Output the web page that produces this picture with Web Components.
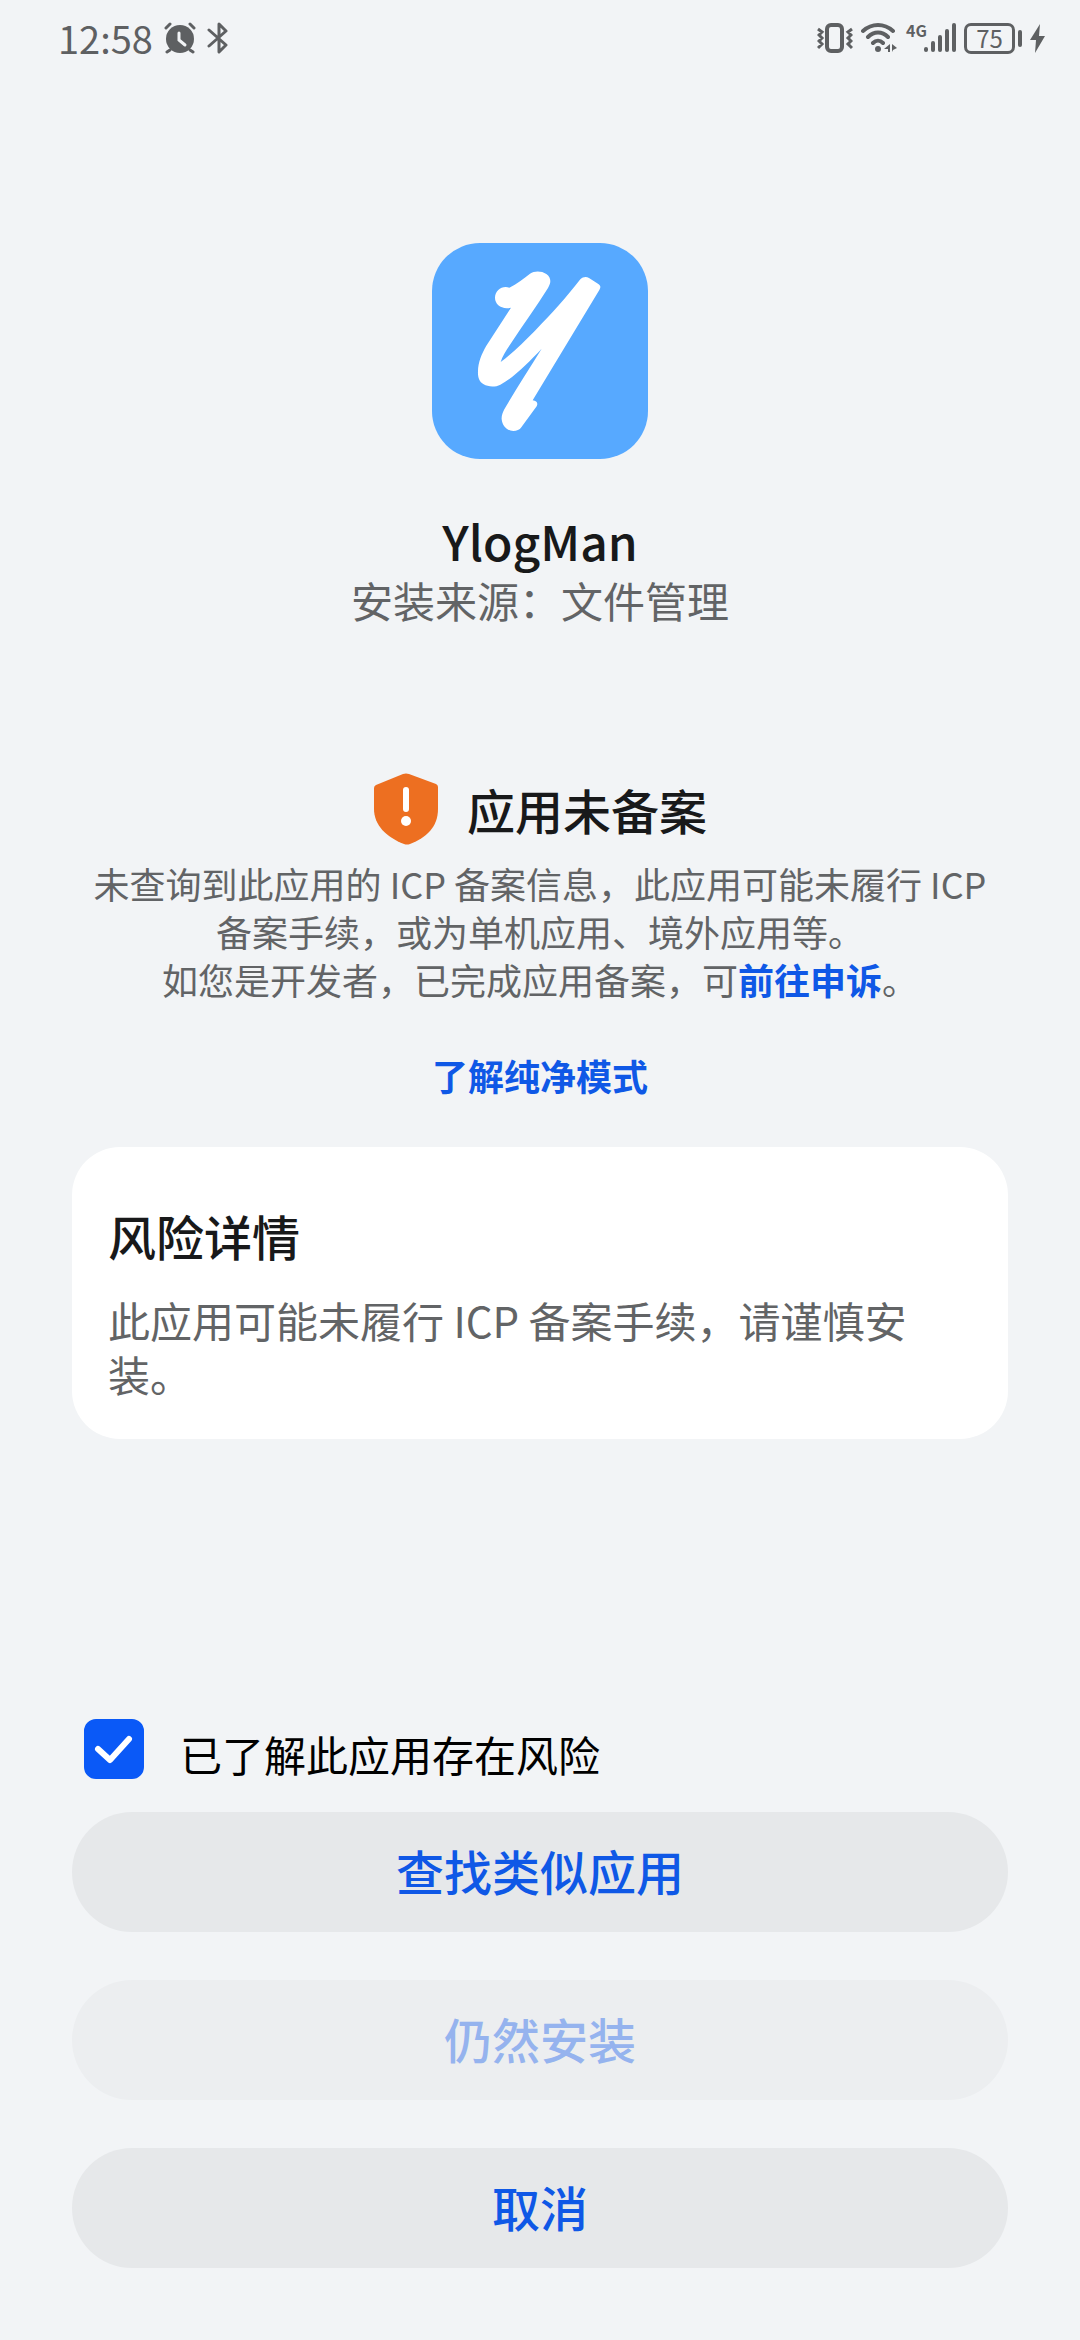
<!doctype html>
<html lang="zh-CN">
<head>
    <meta charset="UTF-8">
    <meta name="viewport" content="width=device-width, initial-scale=1">
    <title>YlogMan</title>
    <style>
        body {
            margin: 0;
            background: #f2f4f6;
            color: #18191a;
            font-family: "Noto Sans CJK SC", sans-serif;
            --accent: #0f58e6;
            --muted: #626466;
        }
    </style>
</head>
<body>
<install-page>
    <status-bar slot="status" time="12:58" battery="75"></status-bar>

    <app-header>
        <app-logo slot="icon"></app-logo>
        YlogMan
        <span slot="source">安装来源：文件管理</span>
    </app-header>

    <risk-notice>
        <span slot="title">应用未备案</span>
        未查询到此应用的 ICP 备案信息，此应用可能未履行 ICP 备案手续，或为单机应用、境外应用等。<br>
        如您是开发者，已完成应用备案，可<text-link href="#appeal">前往申诉</text-link>。
    </risk-notice>

    <text-link class="learn" href="#pure-mode">了解纯净模式</text-link>

    <info-card>
        <span slot="title">风险详情</span>
        此应用可能未履行 ICP 备案手续，请谨慎安装。
    </info-card>

    <check-row slot="actions" checked>已了解此应用存在风险</check-row>
    <pill-button slot="actions">查找类似应用</pill-button>
    <pill-button slot="actions" disabled>仍然安装</pill-button>
    <pill-button slot="actions">取消</pill-button>
</install-page>

<script type="text/javascript">

    // 页面骨架: 状态栏 + 内容 + 底部操作区
    class InstallPage extends HTMLElement {
        constructor () {
            super()
            this.attachShadow({mode: 'open'}).innerHTML = `
            <style>
            :host {
                display: flex;
                flex-direction: column;
                min-height: 100vh;
            }
            main {
                display: flex;
                flex-direction: column;
                padding: 167px 72px 48px;
            }
            ::slotted(risk-notice) { margin-top: 143px; }
            ::slotted(.learn) {
                align-self: center;
                margin: 48px 0;
                font-size: 36px;
                line-height: 48px;
            }
            footer {
                display: flex;
                flex-direction: column;
                gap: 48px;
                margin-top: auto;
                padding: 0 72px 72px;
            }
            ::slotted(check-row) { margin-bottom: -24px; }
            </style>
            <slot name="status"></slot>
            <main><slot></slot></main>
            <footer><slot name="actions"></slot></footer>`
        }
    }
    customElements.define('install-page', InstallPage)

    // 状态栏
    class StatusBar extends HTMLElement {
        constructor () {
            super()
            this.attachShadow({mode: 'open'}).innerHTML = `
            <style>
            :host {
                display: flex;
                justify-content: space-between;
                align-items: center;
                height: 76px;
                padding: 0 35px 0 58px;
                color: #5e6062;
            }
            div { display: flex; align-items: center; }
            svg { display: block; }
            .left { gap: 11px; }
            .right { gap: 8px; }
            .time { font-size: 38px; line-height: 48px; }
            .signal { align-items: flex-start; }
            .net { margin-right: -3px; font-size: 16px; line-height: 16px; font-weight: 700; }
            .battery { gap: 3px; }
            .level {
                box-sizing: border-box;
                width: 51px;
                height: 31px;
                border: 3px solid;
                border-radius: 7px;
                font-size: 24px;
                line-height: 24px;
                text-align: center;
            }
            .cap {
                width: 4px;
                height: 17px;
                border-radius: 2px;
                background: currentColor;
            }
            </style>
            <div class="left">
                <span class="time"></span>
                <svg width="32" height="32" viewBox="0 0 32 32" fill="none" stroke="currentColor" stroke-linecap="round">
                    <circle cx="16" cy="17" r="14" fill="currentColor" stroke="none"/>
                    <path d="M2 6l4-4M30 6l-4-4M6 28l-3 2M26 28l3 2" stroke-width="3"/>
                    <path d="M15 11v7l6 5" stroke="#f2f4f6" stroke-width="3"/>
                </svg>
                <svg width="22" height="32" viewBox="0 0 22 32" fill="none" stroke="currentColor" stroke-width="3" stroke-linecap="round" stroke-linejoin="round">
                    <path d="M2 8l17 15-7 7V2l7 7L2 24"/>
                </svg>
            </div>
            <div class="right">
                <svg width="36" height="32" viewBox="0 0 36 32" fill="none" stroke="currentColor" stroke-width="3">
                    <rect x="10" y="3" width="15" height="26" rx="4" stroke-width="4"/>
                    <path d="M1 7l4 3-3 3 3 3-3 3 3 3-4 4M35 7l-4 3 3 3-3 3 3 3-3 3 4 4"/>
                </svg>
                <svg width="37" height="32" viewBox="0 0 37 32" fill="none" stroke="currentColor" stroke-width="4" stroke-linecap="round">
                    <path d="M2 9c9-8 21-8 30 0M7 15c6-6 14-6 20 0M12 21c3-3 7-3 10 0"/>
                    <circle cx="17" cy="27" r="3" fill="currentColor" stroke="none"/>
                    <path d="M29 22v8h-2v-3h-4zM31 22v8l1-2 4-2z" fill="currentColor" stroke="none"/>
                </svg>
                <div class="signal">
                    <span class="net">4G</span>
                    <svg width="32" height="32" viewBox="0 0 32 32" fill="currentColor">
                        <rect x="0" y="25" width="4" height="5" rx="2"/>
                        <rect x="7" y="19" width="4" height="11" rx="2"/>
                        <rect x="14" y="13" width="4" height="17" rx="2"/>
                        <rect x="21" y="7" width="4" height="23" rx="2"/>
                        <rect x="28" y="1" width="4" height="29" rx="2"/>
                    </svg>
                </div>
                <div class="battery">
                    <span class="level"></span>
                    <span class="cap"></span>
                </div>
                <svg width="15" height="29" viewBox="0 0 15 29" fill="currentColor">
                    <path d="M10 0L0 16h6L5 29l10-17H9z"/>
                </svg>
            </div>`
        }
        connectedCallback () {
            this.shadowRoot.querySelector('.time').textContent = this.getAttribute('time')
            this.shadowRoot.querySelector('.level').textContent = this.getAttribute('battery')
        }
    }
    customElements.define('status-bar', StatusBar)

    // 应用图标
    class AppLogo extends HTMLElement {
        constructor () {
            super()
            this.attachShadow({mode: 'open'}).innerHTML = `
            <style>
            :host {
                display: block;
                width: 216px;
                height: 216px;
                border-radius: 48px;
                background: #57a9ff;
                overflow: hidden;
            }
            svg { display: block; }
            </style>
            <svg width="216" height="216" viewBox="36 39 648 648" fill="#fff">
                <path d="M273 233C246 240 224 224 225 202C226 181 246 166 268 173C290 163 311 145 330 131C344 122 365 123 379 132C394 143 394 158 384 174C350 229 309 284 275 337C261 357 247 378 242 396C275 372 310 337 345 302C397 249 438 203 481 148C489 140 499 139 507 144L535 162C542 167 543 172 538 180L338 511C350 512 355 520 350 529L304 592C299 600 290 603 280 603C260 602 247 588 245 568C244 558 248 548 253 538C288 477 327 417 365 356C327 396 285 440 241 464C226 472 204 471 191 463C177 454 173 441 174 423C174 398 185 371 199 347Z"/>
            </svg>`
        }
    }
    customElements.define('app-logo', AppLogo)

    class AppHeader extends HTMLElement {
        constructor () {
            super()
            this.attachShadow({mode: 'open'}).innerHTML = `
            <style>
            :host {
                display: flex;
                flex-direction: column;
                align-items: center;
            }
            h1 {
                margin: 51px 0 0;
                font-size: 48px;
                line-height: 60px;
                font-weight: 500;
            }
            p {
                margin: 0;
                color: var(--muted);
                font-size: 42px;
                line-height: 60px;
            }
            </style>
            <slot name="icon"></slot>
            <h1><slot></slot></h1>
            <p><slot name="source"></slot></p>`
        }
    }
    customElements.define('app-header', AppHeader)

    // 备案提示
    class RiskNotice extends HTMLElement {
        constructor () {
            super()
            this.attachShadow({mode: 'open'}).innerHTML = `
            <style>
            :host {
                display: block;
                text-align: center;
            }
            header {
                display: flex;
                justify-content: center;
                align-items: center;
                gap: 28px;
            }
            svg { display: block; }
            h2 {
                margin: 0;
                font-size: 48px;
                line-height: 60px;
                font-weight: 500;
            }
            p {
                margin: 14px 0 0;
                padding: 0 18px;
                color: var(--muted);
                font-size: 36px;
                line-height: 48px;
            }
            </style>
            <header>
                <svg width="66" height="72" viewBox="0 0 66 72">
                    <path d="M30 1q3-1 6 0l27 10q2 1 2 3v22c0 18-12 29-28 35q-3 1-6 0C13 64 1 52 1 36V15q0-2 2-3z" fill="#ed6f21"/>
                    <path d="M33 17v19" stroke="#fff" stroke-width="6" stroke-linecap="round"/>
                    <circle cx="33" cy="48" r="5" fill="#fff"/>
                </svg>
                <h2><slot name="title"></slot></h2>
            </header>
            <p><slot></slot></p>`
        }
    }
    customElements.define('risk-notice', RiskNotice)

    // 行内链接, 模板里不能有多余空白, 否则文字前会多出空格
    class TextLink extends HTMLElement {
        constructor () {
            super()
            this.attachShadow({mode: 'open'}).innerHTML = `<style>
            :host { display: inline; }
            a {
                color: var(--accent);
                font-weight: 700;
                text-decoration: none;
            }
            </style><a><slot></slot></a>`
        }
        connectedCallback () {
            this.shadowRoot.querySelector('a').href = this.getAttribute('href')
        }
    }
    customElements.define('text-link', TextLink)

    // 白色卡片
    class InfoCard extends HTMLElement {
        constructor () {
            super()
            this.attachShadow({mode: 'open'}).innerHTML = `
            <style>
            :host {
                display: block;
                padding: 58px 36px 38px;
                border-radius: 48px;
                background: #fff;
            }
            h2 {
                margin: 0 0 28px;
                font-size: 48px;
                line-height: 60px;
                font-weight: 500;
            }
            p {
                margin: 0;
                color: var(--muted);
                font-size: 42px;
                line-height: 54px;
            }
            </style>
            <h2><slot name="title"></slot></h2>
            <p><slot></slot></p>`
        }
    }
    customElements.define('info-card', InfoCard)

    // 复选框
    class CheckRow extends HTMLElement {
        constructor () {
            super()
            this.attachShadow({mode: 'open'}).innerHTML = `
            <style>
            :host {
                display: block;
                padding-left: 12px;
                color: #000;
            }
            label {
                display: flex;
                align-items: flex-start;
                gap: 36px;
                font-size: 42px;
                line-height: 69px;
            }
            .box { display: grid; }
            .box > * { grid-area: 1 / 1; }
            input {
                appearance: none;
                width: 60px;
                height: 60px;
                margin: 0;
                border: 3px solid #a0a2a4;
                border-radius: 12px;
            }
            input:checked {
                border-color: #0a59f7;
                background: #0a59f7;
            }
            svg { pointer-events: none; visibility: hidden; }
            input:checked + svg { visibility: visible; }
            </style>
            <label>
                <span class="box">
                    <input type="checkbox">
                    <svg width="60" height="60" viewBox="0 0 60 60" fill="none" stroke="#fff" stroke-width="6" stroke-linecap="round" stroke-linejoin="round">
                        <path d="M14 30l12 11 19-21"/>
                    </svg>
                </span>
                <span><slot></slot></span>
            </label>`
        }
        connectedCallback () {
            this.shadowRoot.querySelector('input').checked = this.hasAttribute('checked')
        }
    }
    customElements.define('check-row', CheckRow)

    // 胶囊按钮
    class PillButton extends HTMLElement {
        constructor () {
            super()
            this.attachShadow({mode: 'open'}).innerHTML = `
            <style>
            :host { display: block; }
            button {
                display: block;
                width: 100%;
                padding: 28px 36px 32px;
                border: 0;
                border-radius: 60px;
                background: #e6e8ea;
                color: var(--accent);
                font-family: inherit;
                font-size: 48px;
                line-height: 60px;
                font-weight: 500;
            }
            button:disabled {
                background: #eceef0;
                color: #95b3ee;
            }
            </style>
            <button type="button"><slot></slot></button>`
        }
        connectedCallback () {
            this.shadowRoot.querySelector('button').disabled = this.hasAttribute('disabled')
        }
    }
    customElements.define('pill-button', PillButton)

</script>
</body>
</html>
